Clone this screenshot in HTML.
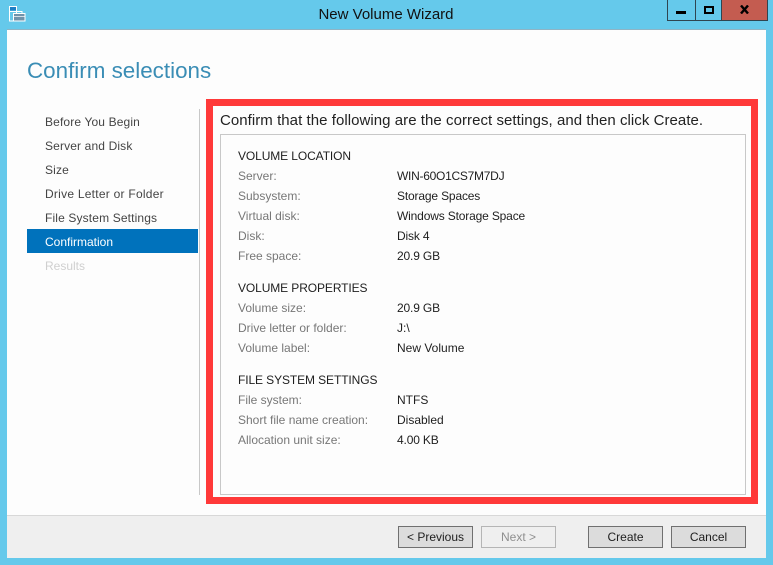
<!DOCTYPE html>
<html><head><meta charset="utf-8"><style>
html,body{margin:0;padding:0}
body{width:773px;height:565px;overflow:hidden;position:relative;background:#65c9eb;font-family:"Liberation Sans",sans-serif;font-size:12px;color:#1e1e1e}
.a{position:absolute;white-space:nowrap;line-height:16px}
.b{position:absolute}
.g{color:#777}
.s{color:#444;letter-spacing:.14px}
.v{letter-spacing:-.16px}
.btn{position:absolute;top:526px;width:75px;height:22px;border:1px solid #707070;background:#dcdcdc;text-align:center;line-height:21px;box-sizing:border-box}
</style></head><body>
<svg class="b" style="left:9px;top:6px" width="17" height="16" viewBox="0 0 17 16"><rect x="0.5" y="0.5" width="7" height="14.5" fill="#65c9eb" stroke="#fff"/><rect x="1" y="1" width="6" height="3.5" fill="#1f7fc4"/><path d="M1 5.5H7" stroke="#fff"/><rect x="4.5" y="7.5" width="11.5" height="7.5" fill="#6f93ab" stroke="#fff"/><rect x="7.5" y="5.5" width="5.5" height="2" fill="none" stroke="#fff"/><path d="M5 10.5H16" stroke="#fff" stroke-width=".7"/></svg>
<div class="a" style="left:0;width:772px;top:7px;text-align:center;font-size:15px;color:#111">New Volume Wizard</div>
<div class="b" style="left:667px;top:-1px;width:101px;height:22px;border:1px solid #2f4550;box-sizing:border-box"></div>
<div class="b" style="left:695px;top:0;width:1px;height:20px;background:#2f4550"></div>
<div class="b" style="left:721px;top:0;width:46px;height:20px;background:#c45c50;border-left:1px solid #2f4550;box-sizing:border-box"></div>
<div class="b" style="left:676px;top:11px;width:10px;height:3px;background:#000"></div>
<div class="b" style="left:704px;top:6px;width:10px;height:8px;border:2px solid #000;box-sizing:border-box"></div>
<svg class="b" style="left:740px;top:5px" width="9" height="9" viewBox="0 0 9 9"><path d="M1 0.5L8 8.5M8 0.5L1 8.5" stroke="#000" stroke-width="2.4" fill="none"/></svg>
<div class="b" style="left:7px;top:30px;width:759px;height:528px;background:#fdfdfd;box-shadow:0 -1px 0 #8fb4c4"></div>
<div class="b" style="left:7px;top:515px;width:759px;height:43px;background:#efefef;border-top:1px solid #d8d8d8;box-sizing:border-box"></div>
<div class="a" style="left:27px;top:56px;line-height:30px;font-size:22.4px;color:#3a8db5">Confirm selections</div>
<div class="a s" style="left:45px;top:114px">Before You Begin</div>
<div class="a s" style="left:45px;top:138px">Server and Disk</div>
<div class="a s" style="left:45px;top:162px">Size</div>
<div class="a s" style="left:45px;top:186px;letter-spacing:.25px">Drive Letter or Folder</div>
<div class="a s" style="left:45px;top:210px">File System Settings</div>
<div class="b" style="left:27px;top:229px;width:171px;height:24px;background:#0072bc"></div>
<div class="a" style="left:45px;top:234px;color:#fff">Confirmation</div>
<div class="a" style="left:45px;top:258px;color:#cfcfcf">Results</div>
<div class="b" style="left:199px;top:109px;width:1px;height:386px;background:#c8c8c8"></div>
<div class="b" style="left:206px;top:99px;width:552px;height:405px;border:7px solid #ff3939;box-sizing:border-box"></div>
<div class="a" style="left:220px;top:113px;font-size:15px;letter-spacing:.05px;color:#222">Confirm that the following are the correct settings, and then click Create.</div>
<div class="b" style="left:220px;top:134px;width:526px;height:361px;border:1px solid #c8c8c8;box-sizing:border-box"></div>
<div class="a" style="left:238px;top:148px;letter-spacing:-.1px">VOLUME LOCATION</div>
<div class="a g" style="left:238px;top:168px">Server:</div><div class="a" style="left:397px;top:168px;letter-spacing:-.27px">WIN-60O1CS7M7DJ</div>
<div class="a g" style="left:238px;top:188px">Subsystem:</div><div class="a v" style="left:397px;top:188px">Storage Spaces</div>
<div class="a g" style="left:238px;top:208px">Virtual disk:</div><div class="a v" style="left:397px;top:208px">Windows Storage Space</div>
<div class="a g" style="left:238px;top:228px">Disk:</div><div class="a v" style="left:397px;top:228px">Disk 4</div>
<div class="a g" style="left:238px;top:248px">Free space:</div><div class="a v" style="left:397px;top:248px">20.9 GB</div>
<div class="a" style="left:238px;top:280px;letter-spacing:-.1px">VOLUME PROPERTIES</div>
<div class="a g" style="left:238px;top:300px">Volume size:</div><div class="a v" style="left:397px;top:300px">20.9 GB</div>
<div class="a g" style="left:238px;top:320px">Drive letter or folder:</div><div class="a" style="left:397px;top:320px">J:\</div>
<div class="a g" style="left:238px;top:340px">Volume label:</div><div class="a" style="left:397px;top:340px">New Volume</div>
<div class="a" style="left:238px;top:372px;letter-spacing:-.1px">FILE SYSTEM SETTINGS</div>
<div class="a g" style="left:238px;top:392px">File system:</div><div class="a" style="left:397px;top:392px">NTFS</div>
<div class="a g" style="left:238px;top:412px">Short file name creation:</div><div class="a" style="left:397px;top:412px">Disabled</div>
<div class="a g" style="left:238px;top:432px">Allocation unit size:</div><div class="a v" style="left:397px;top:432px">4.00 KB</div>
<div class="btn" style="left:398px">&lt; Previous</div>
<div class="btn" style="left:481px;background:#efefef;border-color:#b5b5b5;color:#8f8f8f">Next &gt;</div>
<div class="btn" style="left:588px">Create</div>
<div class="btn" style="left:671px">Cancel</div>
</body></html>
